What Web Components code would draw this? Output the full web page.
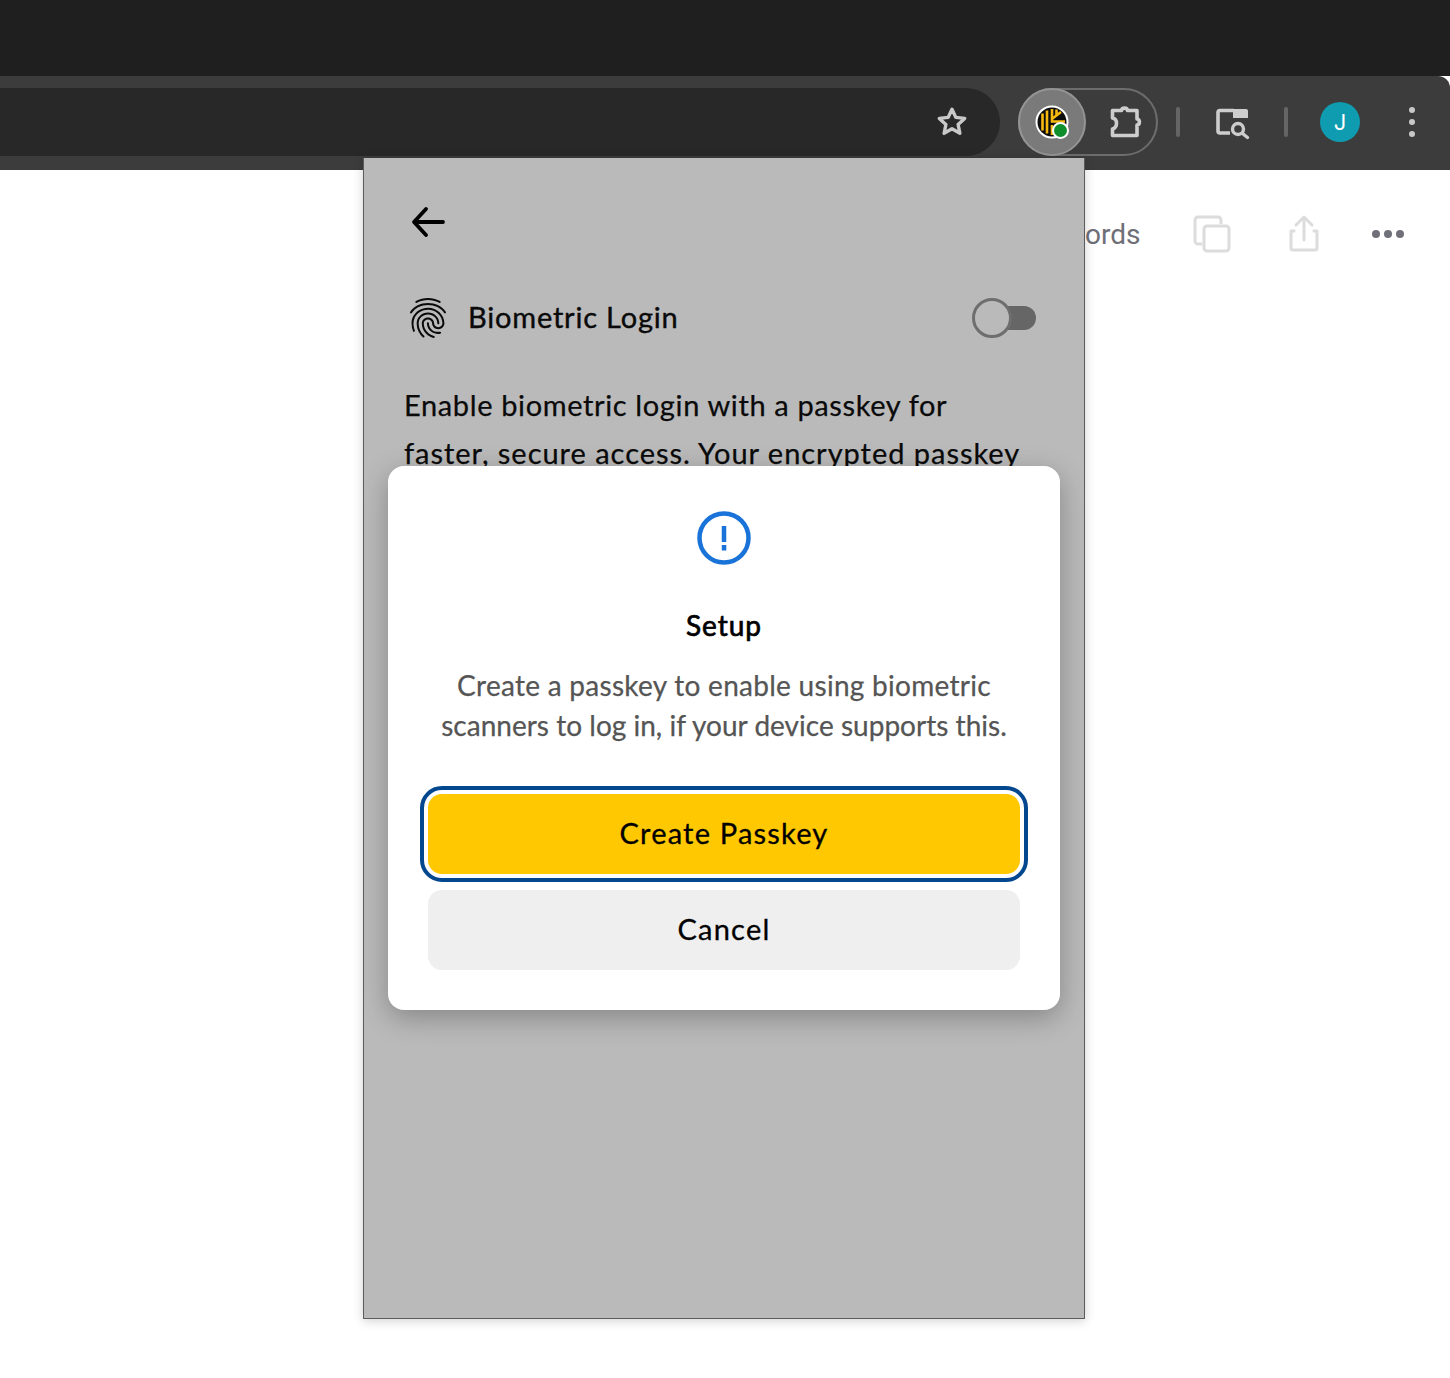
<!DOCTYPE html>
<html>
<head>
<meta charset="utf-8">
<title>Biometric Login</title>
<style>
  html, body { margin: 0; height: 100%; }
  body { background: #fff; font-family: Lato, "Liberation Sans", sans-serif; overflow: hidden; }
</style>
</head>
<body>
<browser-window>
  <browser-toolbar></browser-toolbar>
  <page-actions></page-actions>
  <settings-popup>
    <setup-dialog></setup-dialog>
  </settings-popup>
</browser-window>

<script>
class BrowserWindow extends HTMLElement {
  constructor () {
    super()
    this.attachShadow({ mode: 'open' }).innerHTML = /* html */`
      <style>
        :host { display: block; height: 1378px; position: relative; overflow: hidden; }
        .title-strip { background: #1f1f1f; height: 76px; }
      </style>
      <div class="title-strip"></div>
      <slot></slot>
    `
  }
}

class BrowserToolbar extends HTMLElement {
  constructor () {
    super()
    this.attachShadow({ mode: 'open' }).innerHTML = /* html */`
      <style>
        :host { display: block; }
        .bar {
          align-items: flex-start;
          background: #3c3c3c;
          border-top-right-radius: 12px;
          display: flex;
          height: 94px;
          padding-top: 12px;
          box-sizing: border-box;
        }
        .omnibox {
          align-items: center;
          background: #282828;
          border-radius: 0 34px 34px 0;
          display: flex;
          height: 68px;
          justify-content: flex-end;
          padding-right: 31px;
          width: 1000px;
          box-sizing: border-box;
        }
        .pill {
          border: 2px solid #6d6d6d;
          border-radius: 34px;
          box-sizing: border-box;
          display: flex;
          align-items: center;
          height: 68px;
          margin-left: 18px;
          width: 140px;
        }
        .ext {
          align-items: center;
          background: #7a7a7a;
          border: 2px solid #949494;
          border-radius: 50%;
          box-sizing: border-box;
          display: flex;
          height: 68px;
          justify-content: center;
          margin: -2px 0 -2px -2px;
          width: 68px;
          flex: none;
        }
        .puzzle { margin-left: 20px; display: block; }
        .sep { background: #656565; border-radius: 2px; height: 30px; margin-top: 19px; width: 4px; flex: none; }
        .tools { display: flex; align-items: flex-start; height: 68px; }
        .tab-search { display: block; margin: 18px 33px 0 33px; overflow: visible; }
        .avatar {
          align-items: center;
          background: #0f9bb0;
          border-radius: 50%;
          color: #fff;
          display: flex;
          font: 22px Inter, sans-serif;
          height: 40px;
          justify-content: center;
          margin: 14px 0 0 32px;
          width: 40px;
        }
        .menu { display: flex; flex-direction: column; gap: 6px; margin: 19px 0 0 49px; }
        .menu i { background: #c8c8c8; border-radius: 50%; display: block; height: 6px; width: 6px; }
      </style>
      <div class="bar">
        <div class="omnibox">
          <svg width="34" height="34" viewBox="0 0 34 34"><path d="M17 4.200l3.800 8.200 8.900 1-6.600 6.100 1.800 8.800-7.900-4.500-7.900 4.500 1.800-8.800-6.600-6.100 8.900-1z" fill="none" stroke="#c8c8c8" stroke-width="3.400" stroke-linejoin="round"/></svg>
        </div>
        <div class="pill">
          <div class="ext">
            <svg width="36" height="36" viewBox="0 0 36 36">
              <circle cx="18" cy="18" r="15.500" fill="#0c0c0c" stroke="#fff" stroke-width="2"/>
              <g fill="none" stroke="#f6b90f" stroke-width="2.600">
                <path d="M8.500 9.500v17M13 6.500v23"/>
                <path d="M18 5v12.500h13M18 21v10"/>
                <path d="M18.500 14.500L27 8M22.500 5.500v6.500"/>
              </g>
              <circle cx="26.500" cy="26.500" r="7.500" fill="#0f8f2c" stroke="#fff" stroke-width="2"/>
            </svg>
          </div>
          <svg class="puzzle" width="36" height="36" viewBox="0 0 36 36"><path d="M6.500 6.500h9c.3-3.200 5.700-3.200 6 0h9.500v8.500c3.200.3 3.200 5.700 0 6v10.500H6.500V25c2.800-.8 4-3 4-5.700s-1.200-4.800-4-5.300z" fill="none" stroke="#cdcdcd" stroke-width="3.600" stroke-linejoin="round"/></svg>
        </div>
        <div class="tools">
          <div class="sep" style="margin-left:18px"></div>
          <svg class="tab-search" width="38" height="32" viewBox="0 0 38 32">
            <path d="M21 4.500H7a2 2 0 0 0-2 2V25a2 2 0 0 0 2 2h10" fill="none" stroke="#cdcdcd" stroke-width="3.600"/>
            <path d="M20 3h13a2 2 0 0 1 2 2v7H20z" fill="#cdcdcd"/>
            <circle cx="25" cy="23" r="5.500" fill="#3c3c3c" stroke="#cdcdcd" stroke-width="3.400"/>
            <path d="M29.500 27.500l5 4" stroke="#cdcdcd" stroke-width="3.400" stroke-linecap="round"/>
          </svg>
          <div class="sep"></div>
          <div class="avatar">J</div>
          <div class="menu"><i></i><i></i><i></i></div>
        </div>
      </div>
    `
  }
}

class PageActions extends HTMLElement {
  constructor () {
    super()
    this.attachShadow({ mode: 'open' }).innerHTML = /* html */`
      <style>
        :host { display: block; }
        .row {
          align-items: center;
          display: flex;
          height: 40px;
          margin-top: 44px;
          padding-left: 1085px;
        }
        .label { color: #6e6e76; font: 28px Roboto, sans-serif; padding-top: 1px; width: 108px; white-space: nowrap; }
        svg { display: block; flex: none; }
        .share { margin-left: 57px; }
        .more { margin-left: 51px; }
      </style>
      <div class="row">
        <span class="label">ords</span>
        <svg width="38" height="38" viewBox="0 0 38 38" fill="none" stroke="#dcdcdc" stroke-width="3"><path d="M9 29H5a3 3 0 0 1-3-3V5a3 3 0 0 1 3-3h20a3 3 0 0 1 3 3v4"/><rect x="11" y="11" width="25" height="25" rx="3"/></svg>
        <svg class="share" width="32" height="38" viewBox="0 0 32 38" fill="none" stroke="#dcdcdc" stroke-width="3" stroke-linecap="round" stroke-linejoin="round"><path d="M16 25V3M8 10l8-8 8 8M6 16H3v17a2 2 0 0 0 2 2h22a2 2 0 0 0 2-2V16h-3"/></svg>
        <svg class="more" width="34" height="10" viewBox="0 0 34 10" fill="#70707a"><circle cx="5" cy="5" r="4"/><circle cx="17" cy="5" r="4"/><circle cx="29" cy="5" r="4"/></svg>
      </div>
    `
  }
}

class ToggleSwitch extends HTMLElement {
  constructor () {
    super()
    this.attachShadow({ mode: 'open' }).innerHTML = /* html */`
      <style>
        :host { display: block; height: 40px; position: relative; width: 64px; }
        .track { background: #666; border-radius: 12px; height: 24px; left: 24px; position: absolute; top: 8px; width: 40px; }
        .knob { background: #bababa; border: 3px solid #6e6e6e; border-radius: 50%; box-sizing: border-box; height: 40px; left: 0; position: absolute; top: 0; width: 40px; }
      </style>
      <div class="track"></div>
      <div class="knob"></div>
    `
  }
}

class SettingsPopup extends HTMLElement {
  constructor () {
    super()
    this.attachShadow({ mode: 'open' }).innerHTML = /* html */`
      <style>
        :host {
          background: #bababa;
          border: 1px solid #5c5c5c;
          border-top: 0;
          box-shadow: 0 2px 10px rgba(0, 0, 0, .18);
          box-sizing: border-box;
          display: block;
          height: 1161px;
          left: 363px;
          overflow: hidden;
          position: absolute;
          top: 158px;
          width: 722px;
        }
        .back { display: block; margin: 48px 0 0 47px; }
        .head { align-items: center; display: flex; margin: 56px 48px 0 40px; height: 48px; }
        .head svg { display: block; flex: none; }
        .head h1 { color: #0a0a0a; flex: 1; font-size: 29px; font-weight: 400; letter-spacing: .8px; margin: 0 0 0 16px; padding-bottom: 4px; -webkit-text-stroke: .4px #0a0a0a; }
        p { color: #0a0a0a; font-size: 29px; line-height: 48px; margin: 39px 20px 0 40px; white-space: nowrap; -webkit-text-stroke: .25px #0a0a0a; }
        .l1 { letter-spacing: .63px; }
        .l2 { letter-spacing: .97px; }
      </style>
      <svg class="back" width="34" height="32" viewBox="0 0 34 32" fill="none" stroke="#000" stroke-width="3.800" stroke-linecap="round" stroke-linejoin="round"><path d="M15 3L3 16l12 13M4 16h28"/></svg>
      <div class="head">
        <svg width="48" height="48" viewBox="0 0 24 24" fill="#0a0a0a"><path d="M17.81 4.47c-.08 0-.16-.02-.23-.06C15.66 3.42 14 3 12.01 3c-1.98 0-3.86.47-5.57 1.41-.24.13-.54.04-.68-.2-.13-.24-.04-.55.2-.68C7.82 2.52 9.86 2 12.01 2c2.13 0 3.99.47 6.03 1.52.25.13.34.43.21.67-.09.18-.26.28-.44.28zM3.5 9.72c-.1 0-.2-.03-.29-.09-.23-.16-.28-.47-.12-.7.99-1.4 2.25-2.5 3.75-3.27C9.98 4.04 14 4.03 17.15 5.65c1.5.77 2.76 1.86 3.75 3.25.16.22.11.54-.12.7-.23.16-.54.11-.7-.12-.9-1.26-2.04-2.25-3.39-2.94-2.87-1.47-6.54-1.47-9.4.01-1.36.7-2.5 1.7-3.4 2.96-.08.14-.23.21-.39.21zm6.25 12.07c-.13 0-.26-.05-.35-.15-.87-.87-1.34-1.43-2.01-2.64-.69-1.23-1.05-2.73-1.05-4.34 0-2.97 2.54-5.39 5.66-5.39s5.66 2.42 5.66 5.39c0 .28-.22.5-.5.5s-.5-.22-.5-.5c0-2.42-2.09-4.39-4.66-4.39-2.57 0-4.66 1.97-4.66 4.39 0 1.44.32 2.77.93 3.85.64 1.15 1.08 1.64 1.85 2.42.19.2.19.51 0 .71-.11.1-.24.15-.37.15zm7.17-1.85c-1.19 0-2.24-.3-3.1-.89-1.49-1.01-2.38-2.65-2.38-4.39 0-.28.22-.5.5-.5s.5.22.5.5c0 1.41.72 2.74 1.94 3.56.71.48 1.54.71 2.54.71.24 0 .64-.03 1.04-.1.27-.05.53.13.58.41.05.27-.13.53-.41.58-.57.11-1.07.12-1.21.12zM14.91 22c-.04 0-.09-.01-.13-.02-1.59-.44-2.63-1.03-3.72-2.1-1.4-1.39-2.17-3.24-2.17-5.22 0-1.62 1.38-2.94 3.08-2.94 1.7 0 3.08 1.32 3.08 2.94 0 1.07.93 1.94 2.08 1.94s2.08-.87 2.08-1.94c0-3.77-3.25-6.83-7.25-6.83-2.84 0-5.44 1.58-6.61 4.03-.39.81-.59 1.76-.59 2.8 0 .78.07 2.01.67 3.61.1.26-.03.55-.29.64-.26.1-.55-.04-.64-.29-.49-1.31-.73-2.61-.73-3.96 0-1.2.23-2.29.68-3.24 1.33-2.79 4.28-4.6 7.51-4.6 4.55 0 8.25 3.51 8.25 7.83 0 1.62-1.38 2.94-3.08 2.94s-3.08-1.32-3.08-2.94c0-1.07-.93-1.94-2.08-1.94s-2.08.87-2.08 1.94c0 1.71.66 3.31 1.87 4.51.95.94 1.86 1.46 3.27 1.85.27.07.42.35.35.61-.05.23-.26.38-.47.38z"/></svg>
        <h1>Biometric Login</h1>
        <toggle-switch></toggle-switch>
      </div>
      <p><span class="l1">Enable biometric login with a passkey for</span><br><span class="l2">faster, secure access. Your encrypted passkey</span></p>
      <slot></slot>
    `
  }
}

class SetupDialog extends HTMLElement {
  constructor () {
    super()
    this.attachShadow({ mode: 'open' }).innerHTML = /* html */`
      <style>
        :host {
          background: #fff;
          border-radius: 16px;
          box-shadow: 0 8px 28px rgba(0, 0, 0, .28);
          box-sizing: border-box;
          display: flex;
          flex-direction: column;
          align-items: center;
          height: 544px;
          left: 24px;
          padding: 45px 40px 40px;
          position: absolute;
          top: 308px;
          width: 672px;
        }
        svg { display: block; flex: none; }
        h2 { color: #000; font-size: 28px; font-weight: 400; height: 40px; letter-spacing: 1px; line-height: 40px; margin: 40px 0 0; -webkit-text-stroke: .7px #000; }
        p { color: #555; font-size: 28px; line-height: 40px; margin: 20px -10px 0; text-align: center; white-space: nowrap; -webkit-text-stroke: .25px #555; }
        .l1 { letter-spacing: .28px; }
        .l2 { letter-spacing: .02px; }
        button {
          border: 0;
          border-radius: 14px;
          color: #000;
          display: block;
          flex: none;
          font: 400 29px Lato, sans-serif;
          height: 80px;
          letter-spacing: 1.200px;
          padding: 0 0 4px;
          width: 592px;
          -webkit-text-stroke: .3px #000;
        }
        .primary { background: #ffc800; margin-top: 49px; outline: 4px solid #03488f; outline-offset: 4px; }
        .secondary { background: #efefef; margin-top: 16px; }
      </style>
      <svg width="54" height="54" viewBox="0 0 54 54"><circle cx="27" cy="27" r="24.500" fill="none" stroke="#1a73d8" stroke-width="4.500"/><path d="M27 15v16" stroke="#1a73d8" stroke-width="4.500"/><rect x="24.800" y="34" width="4.500" height="5.500" fill="#1a73d8"/></svg>
      <h2>Setup</h2>
      <p><span class="l1">Create a passkey to enable using biometric</span><br><span class="l2">scanners to log in, if your device supports this.</span></p>
      <button class="primary">Create Passkey</button>
      <button class="secondary">Cancel</button>
    `
  }
}

customElements.define('browser-window', BrowserWindow)
customElements.define('browser-toolbar', BrowserToolbar)
customElements.define('page-actions', PageActions)
customElements.define('toggle-switch', ToggleSwitch)
customElements.define('settings-popup', SettingsPopup)
customElements.define('setup-dialog', SetupDialog)
</script>
</body>
</html>
